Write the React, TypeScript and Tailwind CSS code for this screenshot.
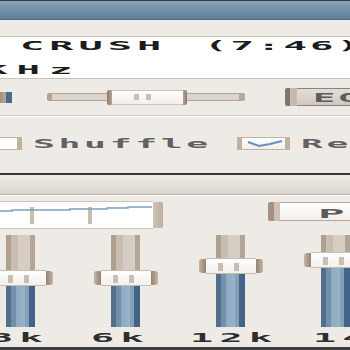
import clsx from 'clsx';

const mono = "font-['DejaVu_Sans_Mono',monospace] font-bold leading-none whitespace-pre block origin-left";

function Pixel({ text, className }: { text: string; className: string }) {
  return <span className={clsx(mono, className)}>{text}</span>;
}

function HThumb() {
  return (
    <div className="absolute left-[60px] top-[-4px] flex h-[15px] w-[80px]">
      <div className="w-[5px] rounded-l-[2px] bg-gradient-to-r from-[#8f7b6b] to-[#b7a594]" />
      <div className="relative flex-1 border-y border-[#cdc3b8] bg-gradient-to-b from-white to-[#f1eeea]">
        <div className="absolute left-[22px] top-[3px] h-[6px] w-[5px] bg-[#c9bfb5]" />
        <div className="absolute left-[34px] top-[3px] h-[6px] w-[5px] bg-[#c9bfb5]" />
      </div>
      <div className="w-[4px] rounded-r-[2px] bg-gradient-to-r from-[#b7a594] to-[#8f7b6b]" />
    </div>
  );
}

function VThumb({ className }: { className: string }) {
  return (
    <div className={clsx('absolute left-1/2 flex h-[16px] w-[64px] -translate-x-1/2', className)}>
      <div className="my-[1px] w-[7px] rounded-l-[3px] bg-gradient-to-r from-[#c6b6a5] to-[#96826f]" />
      <div className="relative flex-1 border-y border-[#c9bdb0] bg-gradient-to-b from-white to-[#f3f0ec]">
        <div className="absolute left-[12px] top-[4px] h-[8px] w-[5px] bg-[#c8beb4]" />
        <div className="absolute left-[28px] top-[4px] h-[8px] w-[5px] bg-[#c8beb4]" />
      </div>
      <div className="my-[1px] w-[7px] rounded-r-[3px] bg-gradient-to-r from-[#96826f] to-[#c6b6a5]" />
    </div>
  );
}

interface BandProps {
  label: string;
  upper: string;
  thumb: string;
  labelClass: string;
}

function Band({ label, upper, thumb, labelClass }: BandProps) {
  return (
    <div className="flex w-[105px] shrink-0 flex-col items-center">
      <div className="relative flex h-[92px] w-[29px] flex-col">
        <div
          className={clsx(
            'bg-[linear-gradient(to_right,#ae9f8f_0,#ae9f8f_5px,#c7bdb1_5px,#c7bdb1_12px,#d6cec5_12px,#d6cec5_24px,#b4a697_24px)]',
            upper
          )}
        />
        <div className="flex-1 bg-[linear-gradient(to_right,#53708a_0,#53708a_5px,#7290aa_5px,#7290aa_10px,#8eabc2_10px,#9ab4c9_19px,#84a1b9_19px,#84a1b9_23px,#436388_23px)]" />
        <VThumb className={thumb} />
      </div>
      <div className="mt-[5px] h-[12px] w-full">
        <Pixel text={label} className={clsx('text-[12px] text-[#2e2e2e] scale-x-[3.2] tracking-[2px]', labelClass)} />
      </div>
    </div>
  );
}

export default function App() {
  return (
    <div className="flex h-[350px] w-[350px] flex-col overflow-hidden bg-[#eeebe6]">
      <div className="h-px shrink-0 bg-[#3d3d3d]" />
      <div className="h-[19px] shrink-0 border-b border-[#4f697e] bg-gradient-to-b from-[#87a4ba] to-[#5f7e96]" />
      <div className="h-[16px] shrink-0" />

      {/* display */}
      <div className="h-[43px] shrink-0 border-y border-[#c8c1b7] bg-white pt-[2px] text-[#1c1c1c]">
        <div className="flex h-[13px]">
          <div className="ml-[20px] w-[184px] shrink-0">
            <Pixel text="CRUSH" className="text-[13px] scale-x-[3.1] tracking-[1.6px]" />
          </div>
          <div className="flex-1">
            <Pixel text="(7:46)" className="text-[13px] scale-x-[3] tracking-[1px]" />
          </div>
        </div>
        <div className="ml-[-16px] mt-[11px] h-[13px]">
          <Pixel text="KHz" className="text-[13px] scale-x-[3] tracking-[3px]" />
        </div>
      </div>

      {/* position / volume row */}
      <div className="flex h-[36px] shrink-0 items-center">
        <div className="mt-[1px] flex h-[11px] w-[12px] shrink-0">
          <div className="w-[6px] bg-gradient-to-r from-[#a38f7e] to-[#bca997]" />
          <div className="w-[6px] bg-[#4d6a8e]" />
        </div>
        <div className="relative ml-[35px] h-[8px] w-[198px] shrink-0 rounded-[2px] border-y border-[#b4a595] bg-[#dcd5cd]">
          <div className="absolute left-0 top-0 h-full w-[5px] bg-[#b3a290]" />
          <div className="absolute right-0 top-0 h-full w-[6px] bg-[#b8a898]" />
          <HThumb />
        </div>
        <div className="ml-[40px] flex h-[18px] flex-1">
          <div className="w-[5px] rounded-l-[2px] bg-[#85746a]" />
          <div className="w-[7px] bg-[#c4baae]" />
          <div className="flex-1 overflow-hidden border-y border-[#8f8276] bg-gradient-to-b from-[#e2ddd8] to-[#d0c9c2] pl-[16px] pt-[3px]">
            <Pixel text="EQ" className="text-[12px] text-[#5c5c5c] scale-x-[3.1] tracking-[1px]" />
          </div>
        </div>
      </div>
      <div className="h-px shrink-0 bg-[#d1cac1]" />
      <div className="h-px shrink-0 bg-white" />

      {/* options row */}
      <div className="flex h-[56px] shrink-0 items-center pb-[3px] text-[#626262]">
        <div className="flex h-[13px] w-[22px] shrink-0 border-y border-[#c3b3a3] bg-white">
          <div className="flex-1" />
          <div className="w-[5px] bg-[#c5b09d]" />
        </div>
        <div className="ml-[11px] w-[204px] shrink-0">
          <Pixel text="Shuffle" className="text-[13px] scale-x-[2.8] tracking-[1.3px]" />
        </div>
        <div className="flex h-[13px] w-[53px] shrink-0 border-y border-[#c3b3a3]">
          <div className="w-[5px] bg-[#c5b09d]" />
          <div className="flex-1 bg-gradient-to-b from-white to-[#f0efee]">
            <svg width="43" height="11" viewBox="0 0 43 11">
              <polyline points="6,4 17,8 28,6 40,3" fill="none" stroke="#6d8dbc" strokeWidth="2" />
            </svg>
          </div>
          <div className="w-[5px] bg-[#c5b09d]" />
        </div>
        <div className="ml-[11px] flex-1">
          <Pixel text="Repeat" className="text-[13px] scale-x-[2.8] tracking-[1.3px]" />
        </div>
      </div>

      <div className="h-[2px] shrink-0 bg-[#3a3a3a]" />
      <div className="h-[20px] shrink-0 border-b border-[#beb2a5] bg-gradient-to-b from-[#eeeae5] to-[#dcd5cd]" />
      <div className="h-px shrink-0 bg-white" />

      {/* equalizer */}
      <div className="flex flex-1 flex-col overflow-hidden pt-[5px]">
        <div className="flex h-[28px] shrink-0">
          <div className="flex h-[28px] w-[163px] shrink-0">
            <div className="relative flex-1 border-y border-[#cdc2b4] bg-white">
              <div className="absolute left-[30px] top-[5px] h-[17px] w-[4px] bg-[#c9bdaf]" />
              <div className="absolute left-[88px] top-[5px] h-[17px] w-[4px] bg-[#c9bdaf]" />
              <svg className="absolute left-0 top-0" width="153" height="26" viewBox="0 0 153 26">
                <polyline
                  points="0,9 12,9 12,8 70,8 70,7 107,7 107,6 128,6 128,5 152,5"
                  fill="none"
                  stroke="#7f9fbc"
                  strokeWidth="1.5"
                />
              </svg>
            </div>
            <div className="mt-[1px] h-[26px] w-[10px] rounded-r-[2px] bg-gradient-to-r from-[#cfc4b6] to-[#bcae9e]" />
          </div>
          <div className="ml-[105px] mt-[1px] flex h-[19px] flex-1">
            <div className="w-[6px] rounded-l-[2px] bg-[#a59180]" />
            <div className="w-[6px] bg-[#cdbfb1]" />
            <div className="flex-1 overflow-hidden border-y border-[#b8a899] bg-gradient-to-b from-white to-[#f1eeea] pl-[38px] pt-[4px]">
              <Pixel text="P" className="text-[13px] text-[#5a5a5a] scale-x-[3.4]" />
            </div>
          </div>
        </div>

        <div className="ml-[-32px] mt-[6px] flex">
          <Band label="3k" upper="h-[43px]" thumb="top-[35px]" labelClass="ml-[22px]" />
          <Band label="6k" upper="h-[43px]" thumb="top-[35px]" labelClass="ml-[18px]" />
          <Band label="12k" upper="h-[30px]" thumb="top-[23px]" labelClass="ml-[12px]" />
          <Band label="14k" upper="h-[24px]" thumb="top-[17px]" labelClass="ml-[30px]" />
        </div>
      </div>
      <div className="h-[3px] shrink-0 bg-[#3d3d3d]" />
    </div>
  );
}
